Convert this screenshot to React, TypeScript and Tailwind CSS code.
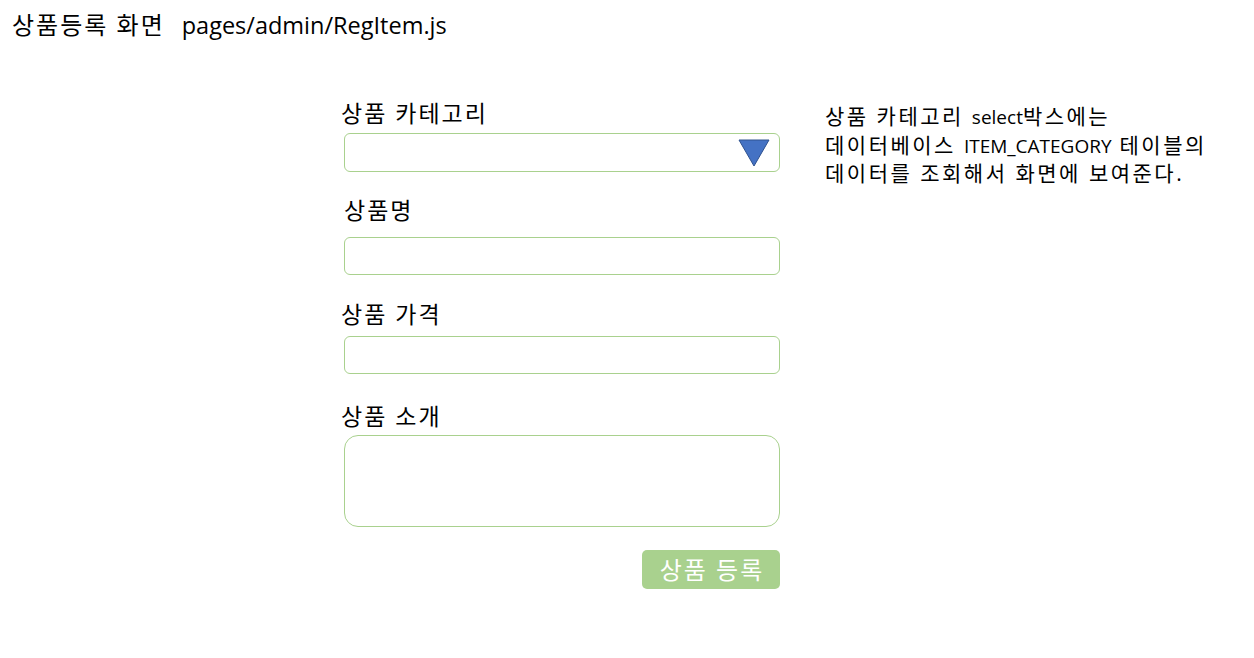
const font = "font-['Open_Sans','Noto_Sans_CJK_KR',sans-serif]";

function Field({ label, className = "", children }: { label: string; className?: string; children?: React.ReactNode }) {
  return (
    <>
      <div className={`h-[28px] text-[23px] leading-[28px] tracking-[2px] text-black ${className}`}>{label}</div>
      {children}
    </>
  );
}

export default function App() {
  return (
    <div className={`h-[658px] w-[1254px] bg-white text-black ${font}`}>
      <header className="flex items-center gap-[17px] pl-[12px] pt-[11px] leading-[28px]">
        <span className="text-[24px] tracking-[2px]">상품등록 화면</span>
        <span className="text-[23.5px]">pages/admin/RegItem.js</span>
      </header>

      <div className="mt-[60px] flex">
        <form className="ml-[341px] flex w-[439px] flex-col">
          <Field label="상품 카테고리">
            <div className="mt-[6px] ml-[3px] flex h-[39px] items-center justify-end rounded-[6px] border border-[#a9d18e] pr-[9px]">
              <svg width="32" height="28" viewBox="0 0 32 28">
                <polygon points="1,1 31,1 16,27" fill="#4472c4" stroke="#2f528f" strokeWidth="1" />
              </svg>
            </div>
          </Field>

          <Field label="상품명" className="mt-[24px] ml-[3px]">
            <div className="mt-[13px] ml-[3px] h-[38px] rounded-[6px] border border-[#a9d18e]" />
          </Field>

          <Field label="상품 가격" className="mt-[25px]">
            <div className="mt-[8px] ml-[3px] h-[38px] rounded-[6px] border border-[#a9d18e]" />
          </Field>

          <Field label="상품 소개" className="mt-[28px]">
            <div className="mt-[5px] ml-[3px] h-[92px] rounded-[14px] border border-[#a9d18e]" />
          </Field>

          <div className="mt-[23px] flex justify-end">
            <button
              type="button"
              className="h-[39px] w-[138px] rounded-[5px] bg-[#a9d18e] pl-[2px] text-[24px] leading-[39px] tracking-[2px] text-white"
            >
              상품 등록
            </button>
          </div>
        </form>

        <div className="ml-[45px] mt-[4px] text-[21px] leading-[27.5px] tracking-[2.5px]">
          <p>
            상품 카테고리 <span className="text-[19px] tracking-normal">select</span>박스에는
          </p>
          <p>
            데이터베이스 <span className="text-[19px] tracking-normal">ITEM_CATEGORY</span> 테이블의
          </p>
          <p>데이터를 조회해서 화면에 보여준다.</p>
        </div>
      </div>
    </div>
  );
}
